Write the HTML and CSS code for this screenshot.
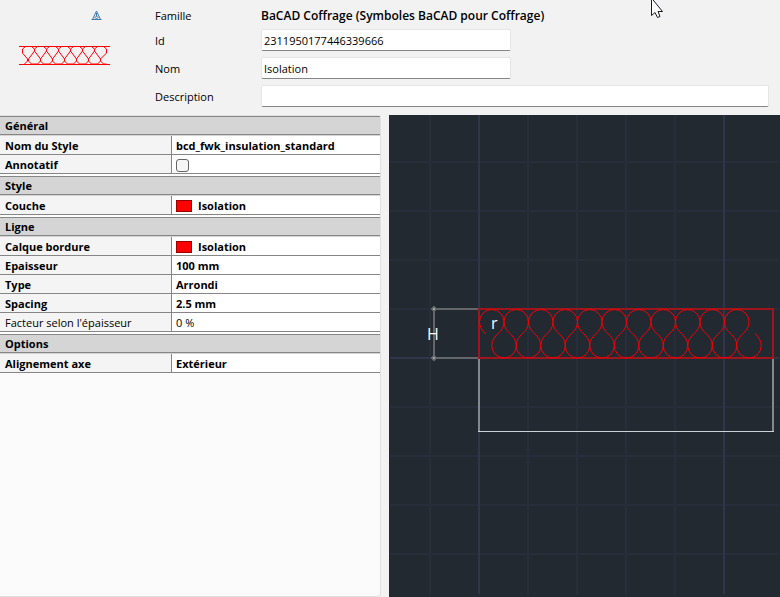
FILE: index.html
```html
<!DOCTYPE html>
<html lang="fr">
<head>
<meta charset="utf-8">
<meta name="viewport" content="width=device-width, initial-scale=1">
<title>BaCAD Coffrage</title>
<link rel="stylesheet" href="styles.css">
</head>
<body>
<div class="app">
  <header class="head">
    <div class="preview">
      <svg class="mark" width="12" height="12" viewBox="0 0 12 12" aria-hidden="true">
        <path d="M5.500 1L1.500 9.500H4L5.500 8L7 9.500H9.500ZM0.500 9.500H10.500M5.500 3V6L3.500 8M5.500 6L7.500 8"/>
      </svg>
      <svg class="thumb" width="92" height="20" viewBox="0 0 92 20" aria-hidden="true">
        <path class="rail" d="M0 1.500H91M0 19.500H91"/>
        <g id="thumb-waves"></g>
      </svg>
    </div>
    <form class="fields">
      <span class="label">Famille</span>
      <strong class="family">BaCAD Coffrage (Symboles BaCAD pour Coffrage)</strong>
      <label for="id">Id</label>
      <input class="box short" id="id" type="text" value="2311950177446339666">
      <label for="nom">Nom</label>
      <input class="box short" id="nom" type="text" value="Isolation">
      <label for="desc">Description</label>
      <input class="box" id="desc" type="text">
    </form>
  </header>
  <main class="work">
    <div class="props">
      <section class="group">
        <h2>Général</h2>
        <table>
          <tr><th scope="row">Nom du Style</th><td>bcd_fwk_insulation_standard</td></tr>
          <tr><th scope="row"><label for="anno">Annotatif</label></th><td><input class="tick" id="anno" type="checkbox"></td></tr>
        </table>
      </section>
      <section class="group">
        <h2>Style</h2>
        <table>
          <tr><th scope="row">Couche</th><td><span class="swatch"></span>Isolation</td></tr>
        </table>
      </section>
      <section class="group">
        <h2>Ligne</h2>
        <table>
          <tr><th scope="row">Calque bordure</th><td><span class="swatch"></span>Isolation</td></tr>
          <tr><th scope="row">Epaisseur</th><td>100 mm</td></tr>
          <tr><th scope="row">Type</th><td>Arrondi</td></tr>
          <tr><th scope="row">Spacing</th><td>2.5 mm</td></tr>
          <tr class="plain"><th scope="row">Facteur selon l'épaisseur</th><td>0 %</td></tr>
        </table>
      </section>
      <section class="group">
        <h2>Options</h2>
        <table>
          <tr><th scope="row">Alignement axe</th><td>Extérieur</td></tr>
        </table>
      </section>
    </div>
    <div class="canvas">
      <svg class="drawing" viewBox="0 0 391 482" preserveAspectRatio="xMinYMin slice" aria-label="Isolation">
        <path class="minor" d="M41 0V479M139 0V479M188 0V479M237 0V479M286 0V479M1 47H390M1 96H390M1 145H390M1 194H390M1 292H390M1 341H390M1 390H390M1 439H390"/>
        <path class="major" d="M90 0V479M335 0V479M1 243H390"/>
        <path class="dim" d="M45 194H90M45 243H90M45 191V246M42 194H47M42 243H47"/>
        <path class="node" d="M43.500 192.500L46.500 195.500M46.500 192.500L43.500 195.500M43.500 241.500L46.500 244.500M46.500 241.500L43.500 244.500"/>
        <path class="wall" d="M90 243V317M384 243V317"/>
        <path class="wallbase" d="M89 316.500H385"/>
        <rect class="slab" x="90" y="194" width="294" height="49"/>
        <g id="waves"></g>
        <text x="38" y="225" class="note">H</text>
        <text x="102" y="214" class="note">r</text>
      </svg>
    </div>
  </main>
  <svg class="cursor" width="14" height="20" viewBox="0 0 14 20" aria-hidden="true">
    <path d="M1.500 -2V15.500L5 12.500L7.500 17.500L10 16.500L8 11.500H12.500Z"/>
  </svg>
</div>
<script src="waves.js"></script>
</body>
</html>
```
FILE: waves.js
```js
const NS = "http://www.w3.org/2000/svg";

function addPath(id, d, cls) {
  const p = document.createElementNS(NS, "path");
  p.setAttribute("d", d);
  p.setAttribute("class", cls);
  document.getElementById(id).appendChild(p);
}

// Rounded insulation hatch: a continuous line of alternating loops.
function hatch(x, top, bottom, step, loops) {
  const r = step / 2;
  const hi = top + r;
  const lo = bottom - r;
  let d = `M${x + r / 2} ${hi + r} Q${x} ${hi + r / 2} ${x} ${hi}`;
  for (let i = 0; i < loops; i++) {
    const left = x + i * step;
    const right = left + step;
    d += `A${r} ${r} 0 0 1 ${right} ${hi}`;
    d += `C${right} ${hi + r} ${left + r} ${lo - r} ${left + r} ${lo}`;
    d += `A${r} ${r} 0 0 0 ${right + r} ${lo}`;
    if (i < loops - 1) {
      d += `C${right + r} ${lo - r} ${right} ${hi + r} ${right} ${hi}`;
    } else {
      d += `Q${right + r} ${lo - r / 2} ${right + r / 2} ${lo - r}`;
    }
  }
  return d;
}

// Simplified hatch with straight segments, for the small preview.
function coarseHatch(x, loops) {
  let d = `M${x + 2} 19L${x + 5} 16V14L${x} 8V4`;
  for (let i = 0; i < loops; i++) {
    const a = x + i * 12;
    const last = i === loops - 1;
    d += `L${a + 3} 1.5H${a + 9}L${a + 12} 4V${last ? 8 : 6}L${a + 6} 14V16L${a + 9} 19`;
    d += last ? `H${a + 12}` : `H${a + 15}L${a + 18} 16V14L${a + 12} 6V4`;
  }
  return d;
}

addPath("waves", hatch(90.5, 194.5, 243, 24.5, 11), "wave");
addPath("thumb-waves", coarseHatch(3.5, 7), "thumb-wave");
```
FILE: styles.css
```css
* { box-sizing: border-box; }
body {
  margin: 0;
  background: #f2f2f2;
  color: #000;
  font: 11px/18px "Open Sans", "Noto Sans", sans-serif;
}
.app { display: flex; flex-direction: column; min-height: 100vh; position: relative; overflow: hidden; }
.head { display: grid; grid-template-columns: 155px 1fr; padding: 5px 11px 8px 0; }
.preview { display: flex; flex-direction: column; padding: 5px 0 0 19px; }
.mark { margin-left: 72px; fill: none; stroke: #3d77ab; }
.thumb { margin-top: 23px; fill: none; stroke: #f00; }
.fields { display: grid; grid-template-columns: 106px 1fr; grid-template-rows: 18px 22px 22px 22px; row-gap: 6px; margin: 0; }
.label, .family { line-height: 22px; }
.fields label { line-height: 24px; }
.family { font-size: 12px; font-weight: 600; white-space: nowrap; }
.box {
  width: 100%; height: 22px; padding: 1px 2px 0; font: inherit; color: inherit;
  background: #fff; border: 1px solid #e5e5e5; border-bottom-color: #868686; border-radius: 2px; outline: none;
}
.short { width: 250px; }
.work { flex: 1; display: grid; grid-template-columns: 381px 1fr; column-gap: 8px; }
.props { background: #fbfbfb; border: 1px solid #e0e0e0; border-left: 0; border-radius: 0 3px 4px 0; }
.group { background: #fff; padding-bottom: 2px; }
.group:last-child { padding-bottom: 0; }
h2 {
  margin: 0; height: 20px; padding-left: 5px; font-size: 11px; line-height: 18px; font-weight: 700;
  background: #d5d5d5; border-top: 1px solid #868686; box-shadow: inset 0 -1px #d5d5d5, inset 0 -2px #868686;
}
table { width: 100%; border-collapse: separate; border-spacing: 0; table-layout: fixed; }
th, td { height: 19px; padding: 2px 4px 0; text-align: left; font-size: 11px; line-height: 16px; font-weight: 700; border-bottom: 1px solid #868686; }
th { width: 172px; padding-left: 5px; background: #f4f4f4; border-right: 1px solid #868686; }
.plain th, .plain td { font-weight: 400; }
.swatch { display: inline-block; width: 16px; height: 12px; margin-right: 6px; background: #f00; border: 1px solid #900; vertical-align: -2px; }
.tick { appearance: none; display: block; width: 13px; height: 13px; margin: 0; background: #f5f5f5; border: 1px solid #666; border-radius: 3px; }
.canvas { position: relative; background: #222930; }
.drawing { position: absolute; inset: 0; width: 100%; height: 100%; fill: none; }
.minor { stroke: #282e39; stroke-width: 2; }
.major { stroke: #30364a; stroke-width: 2; }
.dim { stroke: #63666b; stroke-width: 2; }
.node { stroke: #a0a2a6; }
.wall { stroke: #86878f; stroke-width: 2; }
.wallbase { stroke: #d0d0d8; }
.slab { stroke: #a0151c; stroke-width: 2; }
.wave { stroke: #f40006; }
.note { fill: #fff; font: 16px "Open Sans", sans-serif; }
.cursor { position: absolute; left: 650px; top: 0; fill: #fff; stroke: #1b1b28; }
```
